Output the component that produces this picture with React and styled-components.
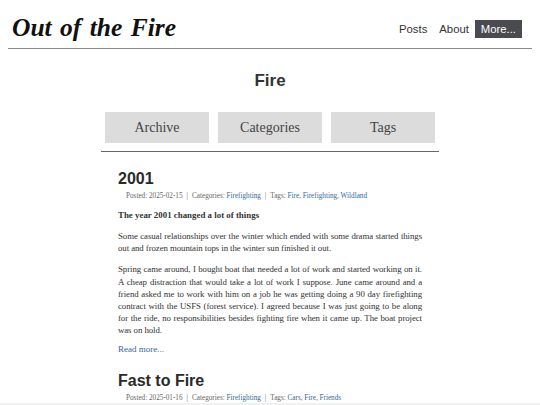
import React from "react";
import styled, { createGlobalStyle } from "styled-components";

const Global = createGlobalStyle`
  body {
    margin: 8px;
    background: #fff;
    font-family: "Liberation Serif", "Times New Roman", serif;
    color: #333;
  }
`;

// header
const Header = styled.header`
  display: flex;
  align-items: center;
  justify-content: space-between;
  padding: 0 10px 0 4px;
  height: 40px;
  border-bottom: 1px solid #8a8a8a;
`;

const Title = styled.h1`
  margin: 0;
  font-family: "Liberation Serif", serif;
  font-style: italic;
  font-weight: 700;
  font-size: 25.5px;
  color: #111;
  word-spacing: 2px;
`;

const Nav = styled.nav`
  display: flex;
  align-items: center;
  gap: 12px;
  padding-top: 2px;
`;

const NavItem = styled.a`
  font-family: "Liberation Sans", Arial, sans-serif;
  font-size: 11.3px;
  color: ${(p) => (p.$active ? "#fff" : "#333")};
  background: ${(p) => (p.$active ? "#4a4b50" : "transparent")};
  padding: ${(p) => (p.$active ? "3px 6px" : "0")};
  margin-left: ${(p) => (p.$active ? "-6px" : "0")};
  text-decoration: none;
`;

// main column
const Main = styled.main`
  width: 338px;
  margin: 0 auto;
`;

const PageTitle = styled.h2`
  margin: 22px 0 0;
  text-align: center;
  font-family: "Liberation Sans", Arial, sans-serif;
  font-size: 17px;
  font-weight: 700;
  color: #333;
`;

const Tabs = styled.div`
  display: grid;
  grid-template-columns: repeat(3, 104px);
  gap: 9px;
  justify-content: center;
  margin-top: 21px;
  padding-bottom: 8px;
  border-bottom: 1px solid #666;
`;

const Tab = styled.a`
  display: flex;
  align-items: center;
  justify-content: center;
  height: 31px;
  background: #dcdcdc;
  color: #444;
  font-size: 14px;
`;

const Post = styled.article`
  padding: 0 17px;
`;

const PostTitle = styled.h3`
  margin: 18px 0 0;
  font-family: "Liberation Sans", Arial, sans-serif;
  font-size: 16px;
  font-weight: 700;
  color: #2a2a2a;
`;

const Meta = styled.div`
  margin: 4px 0 0 8px;
  font-size: 7.2px;
  color: #666;
`;

const Sep = styled.span`
  margin: 0 4px;
`;

const Link = styled.a`
  color: #2d6a9f;
  text-decoration: none;
`;

const Lead = styled.p`
  margin: 10px 0 0;
  font-size: 8.9px;
  font-weight: 700;
  color: #333;
`;

const Para = styled.p`
  margin: ${(p) => (p.$first ? "10px" : "9px")} 0 0;
  font-size: 8.8px;
  line-height: 12.2px;
  letter-spacing: -0.07px;
  color: #333;
  text-align: justify;
`;

const ReadMore = styled(Link)`
  display: block;
  margin-top: 7px;
  font-size: 9px;
`;

const BottomBar = styled.div`
  position: fixed;
  left: 0;
  right: 0;
  bottom: 0;
  height: 2px;
  background: #f0f0f0;
`;

const MetaLine = ({ date, cats, tags }) => (
  <Meta>
    Posted: {date}
    <Sep>|</Sep>
    Categories: {cats.map((c) => <Link key={c}>{c}</Link>)}
    <Sep>|</Sep>
    Tags:{" "}
    {tags.map((t, i) => (
      <React.Fragment key={t}>
        <Link>{t}</Link>
        {i < tags.length - 1 ? ", " : ""}
      </React.Fragment>
    ))}
  </Meta>
);

export default function App() {
  return (
    <>
      <Global />
      <Header>
        <Title>Out of the Fire</Title>
        <Nav>
          <NavItem>Posts</NavItem>
          <NavItem>About</NavItem>
          <NavItem $active>More...</NavItem>
        </Nav>
      </Header>
      <Main>
        <PageTitle>Fire</PageTitle>
        <Tabs>
          <Tab>Archive</Tab>
          <Tab>Categories</Tab>
          <Tab>Tags</Tab>
        </Tabs>
        <Post>
          <PostTitle>2001</PostTitle>
          <MetaLine
            date="2025-02-15"
            cats={["Firefighting"]}
            tags={["Fire", "Firefighting", "Wildland"]}
          />
          <Lead>The year 2001 changed a lot of things</Lead>
          <Para $first>
            Some casual relationships over the winter which ended with some
            drama started things out and frozen mountain tops in the winter sun
            finished it out.
          </Para>
          <Para>
            Spring came around, I bought boat that needed a lot of work and
            started working on it. A cheap distraction that would take a lot of
            work I suppose. June came around and a friend asked me to work with
            him on a job he was getting doing a 90 day firefighting contract
            with the USFS (forest service). I agreed because I was just going to
            be along for the ride, no responsibilities besides fighting fire
            when it came up. The boat project was on hold.
          </Para>
          <ReadMore>Read more...</ReadMore>
        </Post>
        <Post>
          <PostTitle>Fast to Fire</PostTitle>
          <MetaLine
            date="2025-01-16"
            cats={["Firefighting"]}
            tags={["Cars", "Fire", "Friends"]}
          />
        </Post>
      </Main>
      <BottomBar />
    </>
  );
}
